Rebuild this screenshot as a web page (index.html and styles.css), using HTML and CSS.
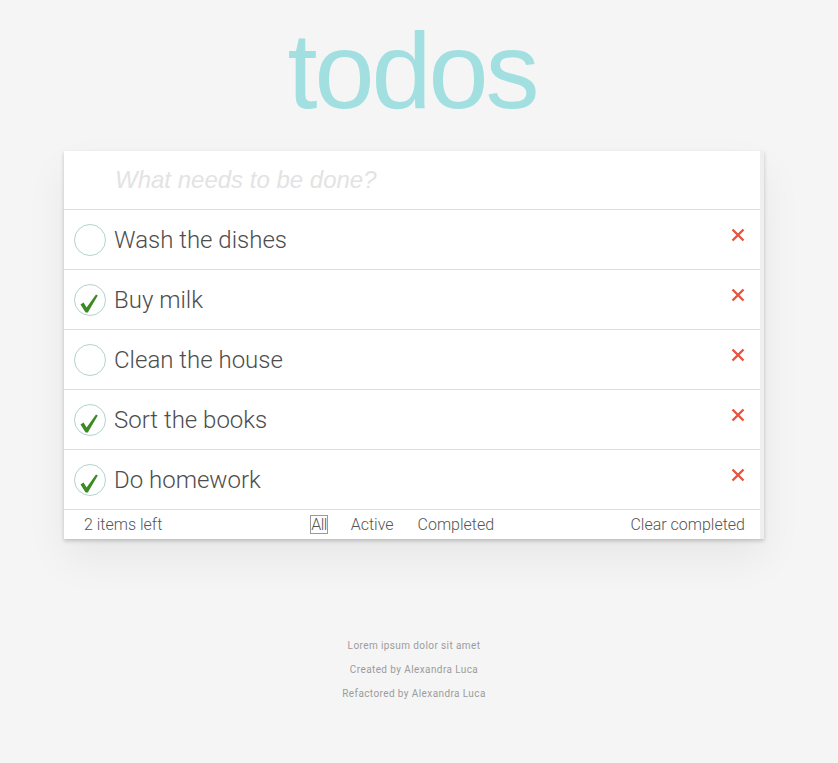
FILE: index.html
```html
<!DOCTYPE html>
<html lang="en">
<head>
<meta charset="utf-8">
<title>todos</title>
<link rel="stylesheet" href="styles.css">
</head>
<body>
<div class="page">
  <h1 class="title">todos</h1>
  <section class="app">
    <header class="new-row">
      <input class="new-todo" type="text" placeholder="What needs to be done?">
    </header>
    <ul class="list">
      <li class="item">
        <span class="toggle"></span>
        <span class="label">Wash the dishes</span>
        <svg class="destroy" viewBox="0 0 14 14"><path d="M1.5 1.5 L12.5 12.5 M12.5 1.5 L1.5 12.5"/></svg>
      </li>
      <li class="item">
        <span class="toggle"><svg class="check" viewBox="0 0 30 30"><path d="M5.5 19.5 L8.6 17.4 L11.6 22.6 L21 9.4 L22.8 10.6 L12.8 27.6 L10.6 27.6 Z"/></svg></span>
        <span class="label">Buy milk</span>
        <svg class="destroy" viewBox="0 0 14 14"><path d="M1.5 1.5 L12.5 12.5 M12.5 1.5 L1.5 12.5"/></svg>
      </li>
      <li class="item">
        <span class="toggle"></span>
        <span class="label">Clean the house</span>
        <svg class="destroy" viewBox="0 0 14 14"><path d="M1.5 1.5 L12.5 12.5 M12.5 1.5 L1.5 12.5"/></svg>
      </li>
      <li class="item">
        <span class="toggle"><svg class="check" viewBox="0 0 30 30"><path d="M5.5 19.5 L8.6 17.4 L11.6 22.6 L21 9.4 L22.8 10.6 L12.8 27.6 L10.6 27.6 Z"/></svg></span>
        <span class="label">Sort the books</span>
        <svg class="destroy" viewBox="0 0 14 14"><path d="M1.5 1.5 L12.5 12.5 M12.5 1.5 L1.5 12.5"/></svg>
      </li>
      <li class="item">
        <span class="toggle"><svg class="check" viewBox="0 0 30 30"><path d="M5.5 19.5 L8.6 17.4 L11.6 22.6 L21 9.4 L22.8 10.6 L12.8 27.6 L10.6 27.6 Z"/></svg></span>
        <span class="label">Do homework</span>
        <svg class="destroy" viewBox="0 0 14 14"><path d="M1.5 1.5 L12.5 12.5 M12.5 1.5 L1.5 12.5"/></svg>
      </li>
    </ul>
    <footer class="footer">
      <span class="count">2 items left</span>
      <ul class="filters">
        <li><a class="filter selected">All</a></li>
        <li><a class="filter">Active</a></li>
        <li><a class="filter">Completed</a></li>
      </ul>
      <span class="clear">Clear completed</span>
    </footer>
  </section>
  <div class="info">
    <p>Lorem ipsum dolor sit amet</p>
    <p>Created by Alexandra Luca</p>
    <p>Refactored by Alexandra Luca</p>
  </div>
</div>
</body>
</html>
```

FILE: styles.css
```css
html, body {
  margin: 0;
  padding: 0;
}

body {
  background: #f5f5f5;
  font-family: Roboto, "Liberation Sans", sans-serif;
  color: #4d4d4d;
}

.page {
  width: 700px;
  margin: 0 auto;
  padding-right: 10px;
}

.title {
  margin: 0;
  padding: 8px 4px 0 0;
  font-family: "Liberation Sans", Arial, sans-serif;
  font-weight: 400;
  font-size: 108px;
  letter-spacing: -3px;
  line-height: normal;
  text-align: center;
  color: #a1dfe1;
}

.app {
  margin-top: 18px;
  width: 700px;
  box-sizing: border-box;
  background: #fff;
  border-right: 4px solid #efefef;
  box-shadow: 0 2px 4px 0 rgba(0, 0, 0, 0.2), 0 20px 40px 0 rgba(0, 0, 0, 0.06);
}

.new-row {
  height: 58px;
  border-bottom: 1px solid #dedede;
  display: flex;
  align-items: center;
}

.new-todo {
  flex: 1;
  border: 0;
  outline: none;
  background: transparent;
  padding: 0 0 0 51px;
  margin: 0;
  height: 40px;
  font-family: "Liberation Sans", Arial, sans-serif;
  font-style: italic;
  font-size: 24px;
  color: #4d4d4d;
}

.new-todo::placeholder {
  color: #e3e3e3;
  font-style: italic;
}

.list {
  list-style: none;
  margin: 0;
  padding: 0;
}

.item {
  height: 59px;
  border-bottom: 1px solid #dedede;
  display: flex;
  align-items: center;
  padding: 0 15px 0 10px;
}

.toggle {
  width: 30px;
  height: 30px;
  border: 1px solid #b4d4cc;
  border-radius: 50%;
  flex: none;
  display: flex;
}

.check {
  width: 30px;
  height: 30px;
}

.check path {
  fill: #3a8b22;
}

.label {
  flex: 1;
  margin-left: 8px;
  font-size: 24px;
  font-weight: 300;
  color: #4d4d4d;
}

.destroy {
  width: 14px;
  height: 14px;
  flex: none;
  margin-bottom: 10px;
}

.destroy path {
  stroke: #e9533d;
  stroke-width: 2.4;
  fill: none;
}

.footer {
  height: 29px;
  display: flex;
  align-items: center;
  padding: 0 15px 0 20px;
  font-size: 16px;
  font-weight: 300;
  color: #555;
}

.filters {
  list-style: none;
  margin: 0 0 0 148px;
  padding: 0;
  display: flex;
  gap: 22px;
}

.filter {
  display: block;
  padding: 0;
  border: 1px solid transparent;
  line-height: 17px;
  color: #555;
}

.filter.selected {
  border-color: #9a9a9a;
  letter-spacing: -0.6px;
}

.clear {
  margin-left: auto;
}

.info {
  margin-top: 95px;
  text-align: center;
  font-size: 10px;
  letter-spacing: 0.4px;
  color: #9c9c9c;
}

.info p {
  margin: 0;
  line-height: 24px;
}
```
